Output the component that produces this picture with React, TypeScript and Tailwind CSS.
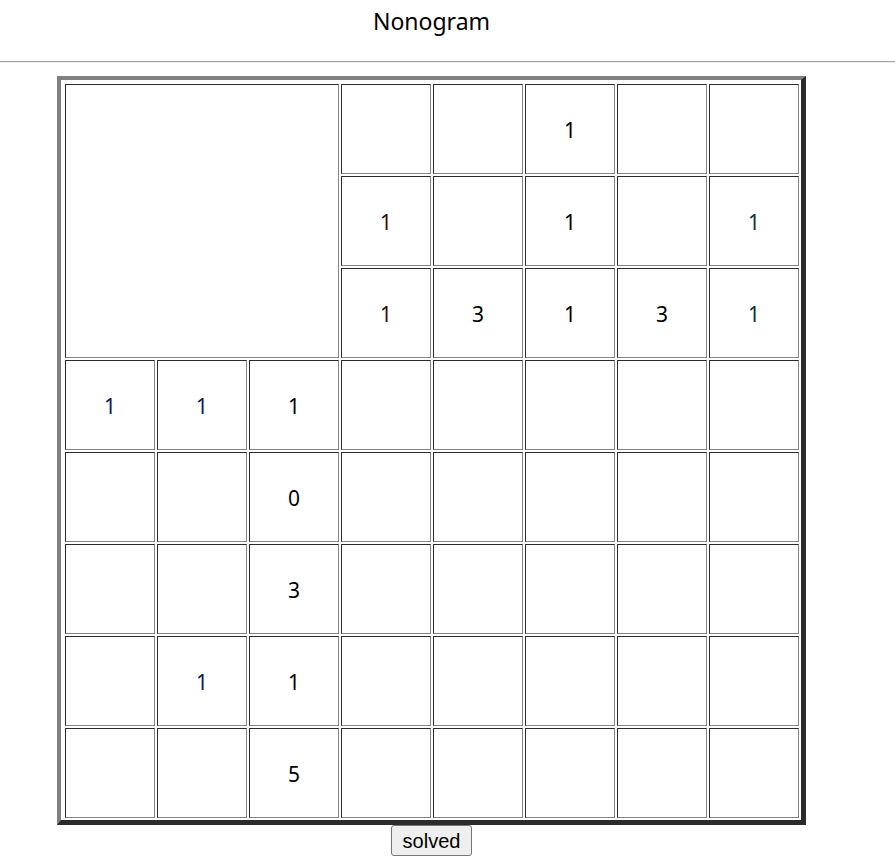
import React from 'react';

const colClues: (string | null)[][] = [
  [null, '1', '1'],
  [null, null, '3'],
  ['1', '1', '1'],
  [null, null, '3'],
  [null, '1', '1'],
];

const rowClues: (string | null)[][] = [
  ['1', '1', '1'],
  [null, null, '0'],
  [null, null, '3'],
  [null, '1', '1'],
  [null, null, '5'],
];

const colColors = ['text-[#3a0a0a]', 'text-black', 'text-black', 'text-black', 'text-[#06303a]'];

function Cell({ children, className = '' }: { children?: React.ReactNode; className?: string }) {
  return (
    <div
      className={`flex items-center justify-center pt-1 border border-t-[#2b2b2b] border-l-[#2b2b2b] border-b-[#858585] border-r-[#858585] bg-white text-[21px] ${className}`}
    >
      {children}
    </div>
  );
}

export default function App() {
  return (
    <div className="min-h-screen bg-white text-black" style={{ fontFamily: '"Noto Sans", "Open Sans", sans-serif' }}>
      <div className="w-[863px] flex flex-col items-center">
        <header className="h-[61px] w-full flex items-center justify-center">
          <h1 className="text-[23px] leading-none -mt-[19px]">Nonogram</h1>
        </header>
      </div>
      <div className="w-full border-t border-t-[#a0a0a0] border-b border-b-[#ededed]" />
      <div className="w-[863px] flex flex-col items-center mt-[13px]">
        <div className="border-l-4 border-t-4 border-r-[5px] border-b-[5px] border-l-[#808080] border-t-[#808080] border-r-[#2b2b2b] border-b-[#2b2b2b] pl-1 pt-1 pr-[2px] pb-[2px]">
          <div className="grid grid-cols-[repeat(8,90px)] grid-rows-[repeat(8,90px)] gap-[2px]">
            <Cell className="col-span-3 row-span-3" />
            {[0, 1, 2].map((r) =>
              colClues.map((c, ci) => (
                <Cell key={`c${r}-${ci}`} className={colColors[ci]}>
                  {c[r]}
                </Cell>
              ))
            )}
            {rowClues.map((row, ri) => (
              <React.Fragment key={`r${ri}`}>
                {row.map((v, i) => (
                  <Cell key={`rc${ri}-${i}`} className={i < 2 ? 'text-[#0a1a50]' : 'text-black'}>
                    {v}
                  </Cell>
                ))}
                {[0, 1, 2, 3, 4].map((j) => (
                  <Cell key={`g${ri}-${j}`} />
                ))}
              </React.Fragment>
            ))}
          </div>
        </div>
        <button
          type="button"
          className="w-[81px] h-[31px] bg-[#efefef] border border-[#767676] rounded-[3px] text-[20px] leading-none text-black"
          style={{ fontFamily: '"Liberation Sans", Arial, sans-serif' }}
        >
          solved
        </button>
      </div>
    </div>
  );
}
